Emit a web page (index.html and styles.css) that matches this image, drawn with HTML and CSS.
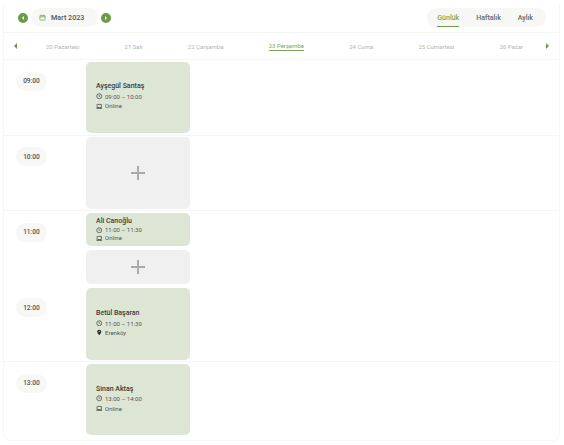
FILE: index.html
```html
<!DOCTYPE html>
<html lang="tr">
<head>
  <meta charset="UTF-8">
  <meta name="viewport" content="width=device-width, initial-scale=1.0">
  <title>Takvim</title>
  <link rel="stylesheet" href="styles.css">
</head>
<body>
  <svg class="sprite" width="0" height="0">
    <symbol id="clock" viewBox="0 0 12 12"><circle cx="6" cy="6" r="4.6" fill="none" stroke="#222" stroke-width="1.1"/><path d="M6 3.4V6.2L7.8 7.2" fill="none" stroke="#222" stroke-width="1"/></symbol>
    <symbol id="laptop" viewBox="0 0 12 12"><rect x="2" y="2.6" width="8" height="5.8" rx=".6" fill="none" stroke="#222" stroke-width="1.1"/><path d="M.8 9.8H11.2" stroke="#222" stroke-width="1.3"/></symbol>
    <symbol id="pin" viewBox="0 0 12 12"><path d="M6 1.2A3.7 3.7 0 0 0 2.3 4.9C2.3 7.4 6 11 6 11S9.7 7.4 9.7 4.9A3.7 3.7 0 0 0 6 1.2Z" fill="#222"/><circle cx="6" cy="4.9" r="1.2" fill="#dde6d5"/></symbol>
  </svg>

  <div class="calendar">
    <div class="toolbar">
      <div class="month-nav">
        <button class="round-btn"><span class="tri tri-left tri-white"></span></button>
        <div class="month">
          <svg class="cal-icon" viewBox="0 0 12 12"><rect x="1.5" y="2.5" width="9" height="8" rx="1" fill="none" stroke="#6a9c46" stroke-width="1.1"/><path d="M1.5 4.8H10.5" stroke="#6a9c46" stroke-width="1.3"/><path d="M3.8 1V3M8.2 1V3" stroke="#6a9c46" stroke-width="1"/></svg>
          <span>Mart 2023</span>
        </div>
        <button class="round-btn"><span class="tri tri-right tri-white"></span></button>
      </div>
      <div class="views">
        <span class="view active">Günlük</span>
        <span class="view">Haftalık</span>
        <span class="view">Aylık</span>
      </div>
    </div>

    <div class="days">
      <span class="tri tri-left"></span>
      <div class="day-list">
        <span class="day">20 Pazartesi</span>
        <span class="day">21 Salı</span>
        <span class="day">22 Çarşamba</span>
        <span class="day active">23 Perşembe</span>
        <span class="day">24 Cuma</span>
        <span class="day">25 Cumartesi</span>
        <span class="day">26 Pazar</span>
      </div>
      <span class="tri tri-right"></span>
    </div>

    <div class="row">
      <div class="time-col"><span class="time">09:00</span></div>
      <div class="slots">
        <div class="card">
          <div class="name">Ayşegül Santaş</div>
          <div class="info"><svg><use href="#clock"/></svg>09:00 – 10:00</div>
          <div class="info"><svg><use href="#laptop"/></svg>Online</div>
        </div>
      </div>
    </div>

    <div class="row">
      <div class="time-col"><span class="time">10:00</span></div>
      <div class="slots">
        <div class="card empty"><span class="plus"></span></div>
      </div>
    </div>

    <div class="row no-line">
      <div class="time-col"><span class="time">11:00</span></div>
      <div class="slots">
        <div class="card half">
          <div class="name">Ali Canoğlu</div>
          <div class="info"><svg><use href="#clock"/></svg>11:00 – 11:30</div>
          <div class="info"><svg><use href="#laptop"/></svg>Online</div>
        </div>
        <div class="card half empty"><span class="plus"></span></div>
      </div>
    </div>

    <div class="row">
      <div class="time-col"><span class="time">12:00</span></div>
      <div class="slots">
        <div class="card">
          <div class="name">Betül Başaran</div>
          <div class="info"><svg><use href="#clock"/></svg>11:00 – 11:30</div>
          <div class="info"><svg><use href="#pin"/></svg>Erenköy</div>
        </div>
      </div>
    </div>

    <div class="row no-line">
      <div class="time-col"><span class="time">13:00</span></div>
      <div class="slots">
        <div class="card">
          <div class="name">Sinan Aktaş</div>
          <div class="info"><svg><use href="#clock"/></svg>13:00 – 14:00</div>
          <div class="info"><svg><use href="#laptop"/></svg>Online</div>
        </div>
      </div>
    </div>
  </div>
</body>
</html>
```

FILE: styles.css
```css
body {
  margin: 0;
  background: #fff;
  font-family: Roboto, "Liberation Sans", sans-serif;
  color: #333;
}

.sprite {
  display: block;
  height: 0;
}

.calendar {
  width: 557px;
  height: 438px;
  margin: 3px 0 0 3px;
  border: 1px solid #f6f8f6;
  border-top: 0;
  border-radius: 0 0 8px 8px;
  box-sizing: border-box;
  overflow: hidden;
}

.toolbar {
  display: flex;
  justify-content: space-between;
  align-items: center;
  height: 29px;
  padding: 0 13px 0 14px;
  border-bottom: 1px solid #f6f6f4;
}

.month-nav {
  display: flex;
  align-items: center;
  gap: 3px;
}

.round-btn {
  display: flex;
  align-items: center;
  justify-content: center;
  width: 10px;
  height: 10px;
  padding: 0;
  border: 0;
  border-radius: 50%;
  background: #6a9c46;
}

.month {
  display: flex;
  align-items: center;
  gap: 5px;
  width: 67px;
  height: 19px;
  padding-left: 8px;
  border-radius: 10px;
  background: #f7f7f5;
  box-sizing: border-box;
  font-size: 7.2px;
  font-weight: 500;
  color: #555;
}

.cal-icon {
  width: 7px;
  height: 7px;
}

.tri {
  display: block;
  flex: none;
  width: 0;
  height: 0;
  border-top: 3px solid transparent;
  border-bottom: 3px solid transparent;
}

.tri-left {
  border-right: 3px solid #6a9c46;
}

.tri-right {
  border-left: 3px solid #6a9c46;
}

.tri-white {
  border-top-width: 2px;
  border-bottom-width: 2px;
}

.tri-white.tri-left {
  border-right: 2px solid #fff;
}

.tri-white.tri-right {
  border-left: 2px solid #fff;
}

.views {
  display: flex;
  gap: 17px;
  height: 19px;
  align-items: center;
  padding: 0 13px 0 10px;
  border-radius: 10px;
  background: #f7f7f5;
}

.view {
  position: relative;
  font-size: 7px;
  font-weight: 500;
  color: #666;
}

.view.active {
  color: #7aa854;
}

.view.active::after {
  content: "";
  position: absolute;
  left: 0;
  right: 0;
  bottom: -5px;
  height: 1px;
  background: #6a9c46;
}

.days {
  display: flex;
  align-items: center;
  height: 27px;
  padding: 0 10px;
  border-bottom: 1px solid #f6f6f4;
  box-sizing: border-box;
}

.day-list {
  display: flex;
  flex: 1;
  justify-content: space-between;
  align-items: center;
  padding: 0 23px 0 29px;
}

.day {
  font-size: 6px;
  color: #b4b4b4;
}

.day.active {
  padding-bottom: 1px;
  border-bottom: 1px solid #7aa854;
  color: #7aa854;
}

.row {
  display: flex;
  height: 75.6px;
  border-bottom: 1px solid #f6f6f4;
  box-sizing: border-box;
}

.row.no-line {
  border-bottom: 0;
}

.time-col {
  width: 82px;
  padding: 11.5px 0 0 12px;
  box-sizing: border-box;
}

.time {
  display: flex;
  align-items: center;
  justify-content: center;
  width: 31px;
  height: 19px;
  border-radius: 10px;
  background: #f7f7f5;
  font-size: 6.6px;
  font-weight: 500;
  color: #555;
}

.slots {
  display: flex;
  flex-direction: column;
  gap: 4px;
  width: 104px;
  padding-top: 1.5px;
}

.card {
  display: flex;
  flex-direction: column;
  justify-content: center;
  gap: 2.5px;
  height: 71.5px;
  padding: 0 10px 3px;
  border-radius: 5px;
  background: #dde6d5;
  box-sizing: border-box;
}

.card.half {
  flex: none;
  gap: 1px;
  height: 33.5px;
  padding-bottom: 0;
}

.card.empty {
  align-items: center;
  padding-bottom: 0;
  background: #f0f0f0;
}

.name {
  height: 8px;
  line-height: 8px;
  font-size: 7px;
  font-weight: 500;
  color: #3a3a3a;
}

.info {
  display: flex;
  align-items: center;
  gap: 2.5px;
  height: 7px;
  line-height: 7px;
  font-size: 6px;
  color: #555;
}

.info svg {
  width: 6.5px;
  height: 6.5px;
}

.plus {
  position: relative;
  display: block;
  width: 14px;
  height: 14px;
}

.plus::before,
.plus::after {
  content: "";
  position: absolute;
  background: #ababab;
}

.plus::before {
  left: 0;
  right: 0;
  top: 6px;
  height: 2px;
}

.plus::after {
  top: 0;
  bottom: 0;
  left: 6px;
  width: 2px;
}
```
